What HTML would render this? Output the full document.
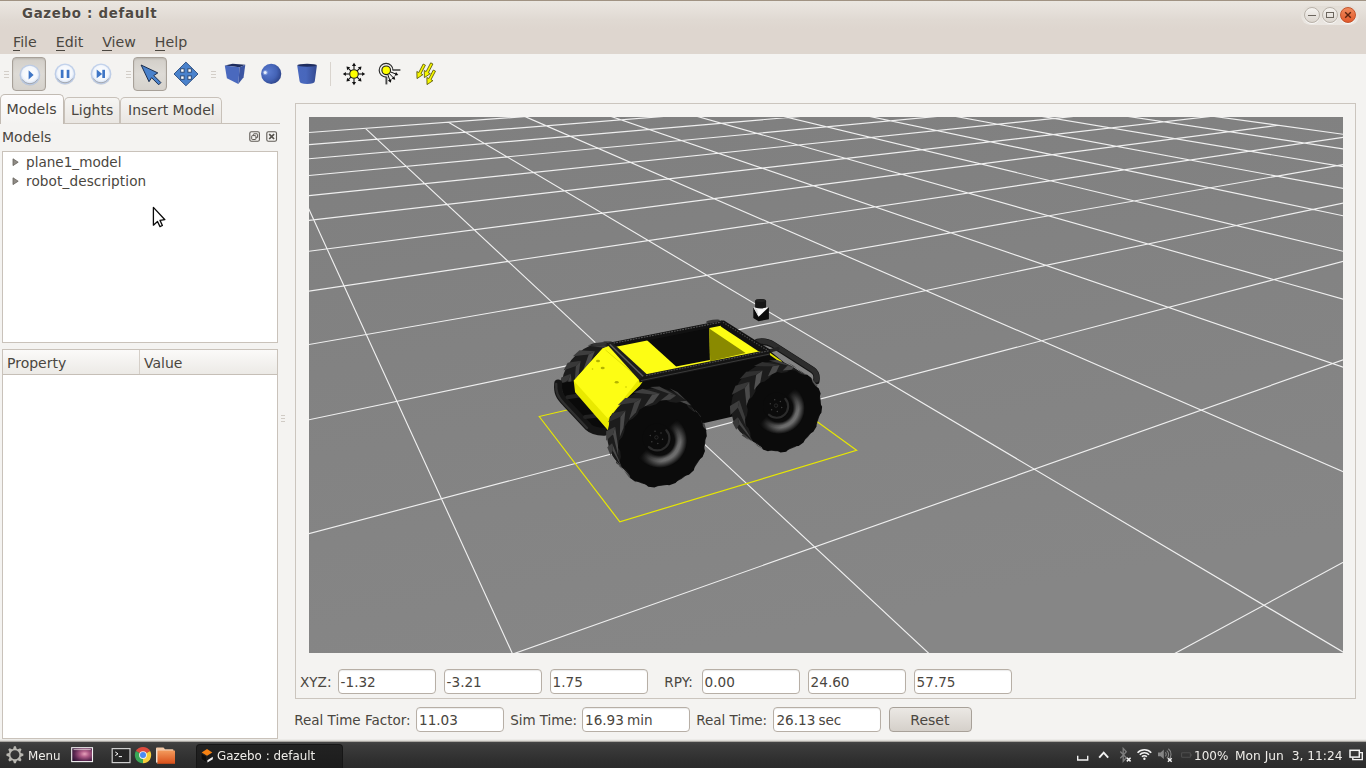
<!DOCTYPE html>
<html><head><meta charset="utf-8"><title>Gazebo : default</title>
<style>

html,body{margin:0;padding:0;}
body{width:1366px;height:768px;overflow:hidden;position:relative;background:#f4f3f1;font-family:"DejaVu Sans","Liberation Sans",sans-serif;font-size:13.33px;color:#4a4640;}
.a{position:absolute;}
.t{position:absolute;white-space:nowrap;line-height:16px;height:16px;}
#tb{left:0;top:0;width:1366px;height:54px;background:linear-gradient(#a09383 0,#a09383 1px,#eae7e1 1px,#e6e1db 9px,#e0d9d2 20px,#ded6cf 29px,#ded6cf 54px);}
#title{font-weight:bold;letter-spacing:0.72px;color:#4f4a44;text-shadow:0 1px 0 rgba(255,255,255,.6);}
.wb{position:absolute;width:16px;height:16px;border-radius:50%;box-sizing:border-box;border:1px solid #b9b2a9;background:linear-gradient(#f6f4f1,#dcd6cf);box-shadow:0 1px 0 rgba(255,255,255,.7);}
.wb.c{border-color:#c4532a;background:linear-gradient(#f08a5d,#e2592b);}
.pressed{position:absolute;box-sizing:border-box;border:1px solid #a8a199;border-radius:4px;background:linear-gradient(#d2cec8,#dedbd6 50%,#d6d2cc);box-shadow:inset 0 1px 2px rgba(0,0,0,.12);}
.grip{position:absolute;width:5px;height:1px;background:#d3cec8;box-shadow:0 3px 0 #d3cec8,0 6px 0 #d3cec8;}
.tab{position:absolute;box-sizing:border-box;border:1px solid #c8c1b9;border-bottom:none;border-radius:5px 5px 0 0;background:linear-gradient(#f6f5f3,#e9e6e2);}
.tab.sel{background:linear-gradient(#fdfcfc,#f8f7f6 60%,#f4f3f1);border-color:#c2bbb3;}
.box{position:absolute;box-sizing:border-box;border:1px solid #c9c2ba;background:#fff;}
.inp{position:absolute;box-sizing:border-box;border:1px solid #b7afa6;border-radius:4px;background:#fff;height:25px;box-shadow:inset 0 1px 1px rgba(0,0,0,.08);}
.btn{position:absolute;box-sizing:border-box;border:1px solid #a8a199;border-radius:4px;background:linear-gradient(#ebe8e4,#d5d0ca);}
#task{left:0;top:742px;width:1366px;height:26px;background:linear-gradient(#454545 0,#3c3c3c 3px,#2f2f2f 70%,#2b2b2b 100%);}
#task .t{color:#ecebe8;}
u{text-decoration:none;border-bottom:1px solid #4a4640;}

</style></head>
<body>
<div class="a" id="tb"></div>
<span class="t" id="title" style="left:22.0px;top:6.2px;">Gazebo : default</span>
<div class="a" style="left:1301px;top:6px;width:58px;height:19px;border-radius:10px;background:linear-gradient(#e2ddd6,#ebe7e2);"></div>
<div class="wb" style="left:1304px;top:7px"></div><div class="a" style="left:1308px;top:15px;width:8px;height:1.4px;background:#6b655d"></div>
<div class="wb" style="left:1321.5px;top:7px"></div><div class="a" style="left:1325.5px;top:11.5px;width:8px;height:6px;box-sizing:border-box;border:1.3px solid #6b655d"></div>
<div class="wb c" style="left:1339.5px;top:7px"></div><svg class="a" style="left:1339.5px;top:7px" width="16" height="16"><path d="M5.2 5.2L10.8 10.8M10.8 5.2L5.2 10.8" stroke="#5a2410" stroke-width="1.4" fill="none"/></svg>
<span class="t" style="left:13px;top:33.9px;font-size:14.2px;"><u>F</u>ile</span>
<span class="t" style="left:55.8px;top:33.9px;font-size:14.2px;"><u>E</u>dit</span>
<span class="t" style="left:102.2px;top:33.9px;font-size:14.2px;"><u>V</u>iew</span>
<span class="t" style="left:154.8px;top:33.9px;font-size:14.2px;"><u>H</u>elp</span>
<div class="grip" style="left:4px;top:71px"></div>
<div class="grip" style="left:126px;top:71px"></div>
<div class="grip" style="left:211px;top:71px"></div>
<div class="pressed" style="left:12px;top:57px;width:34px;height:34px"></div>
<div class="pressed" style="left:133px;top:57px;width:34px;height:34px"></div>
<div class="a" style="left:330px;top:62px;width:1px;height:24px;background:#d9d4ce"></div>
<svg class="a" style="left:0;top:54px" width="460" height="42" viewBox="0 54 460 42">
<defs>
<radialGradient id="pb" cx="0.5" cy="0.45" r="0.55"><stop offset="0" stop-color="#ffffff"/><stop offset="0.72" stop-color="#f4f7fc"/><stop offset="0.86" stop-color="#dfe8f6"/><stop offset="1" stop-color="#b9cdee"/></radialGradient>
<radialGradient id="sph" cx="0.36" cy="0.40" r="0.75"><stop offset="0" stop-color="#5a7bd0"/><stop offset="0.55" stop-color="#4463b6"/><stop offset="0.9" stop-color="#2d4388"/><stop offset="1" stop-color="#1d2c60"/></radialGradient>
<linearGradient id="cyl" x1="0" y1="0" x2="1" y2="0"><stop offset="0" stop-color="#4a68be"/><stop offset="0.45" stop-color="#4867bc"/><stop offset="1" stop-color="#34498f"/></linearGradient>
</defs>
<circle cx="29.9" cy="75.39999999999999" r="10.2" fill="#9a9a9a" opacity="0.35"/><circle cx="29.9" cy="74.8" r="10.4" fill="#b5cbee" opacity="0.75"/><circle cx="29.9" cy="74.8" r="9.1" fill="url(#pb)"/><path d="M22.299999999999997 79.39999999999999A8.9 8.9 0 0 0 37.5 79.39999999999999" stroke="#9c9c9c" stroke-width="1" fill="none" opacity="0.8"/>
<path d="M28.6 70.3L33.6 74.9L28.6 79.5Z" fill="#3f76c6"/>
<circle cx="65" cy="74.5" r="10.2" fill="#9a9a9a" opacity="0.35"/><circle cx="65" cy="73.9" r="10.4" fill="#b5cbee" opacity="0.75"/><circle cx="65" cy="73.9" r="9.1" fill="url(#pb)"/><path d="M57.4 78.5A8.9 8.9 0 0 0 72.6 78.5" stroke="#9c9c9c" stroke-width="1" fill="none" opacity="0.8"/>
<rect x="60.8" y="69.8" width="2.7" height="8.2" fill="#3f76c6"/><rect x="66.7" y="69.8" width="2.7" height="8.2" fill="#3f76c6"/>
<circle cx="101" cy="74.5" r="10.2" fill="#9a9a9a" opacity="0.35"/><circle cx="101" cy="73.9" r="10.4" fill="#b5cbee" opacity="0.75"/><circle cx="101" cy="73.9" r="9.1" fill="url(#pb)"/><path d="M93.4 78.5A8.9 8.9 0 0 0 108.6 78.5" stroke="#9c9c9c" stroke-width="1" fill="none" opacity="0.8"/>
<path d="M96.7 69.6L102.2 73.9L96.7 78.2Z" fill="#3f76c6"/><rect x="102.3" y="69.8" width="2.7" height="8.2" fill="#3f76c6"/>
<path d="M141.1 65L157.8 72.9L153.8 75.5L160.9 82.6L158.7 84.8L151.6 77.7L149 81.7Z" fill="#4a82cc" stroke="#1d2f4f" stroke-width="1" stroke-linejoin="miter"/>
<path d="M174 74L185.9 62.1L198 74L185.9 85.8Z" fill="#4a82cc" stroke="#2b4c7e" stroke-width="0.9" stroke-linejoin="round"/>
<rect x="180.7" y="68.8" width="3.4" height="3.4" fill="#fff" stroke="#24406c" stroke-width="0.9"/>
<rect x="187.9" y="68.8" width="3.4" height="3.4" fill="#fff" stroke="#24406c" stroke-width="0.9"/>
<rect x="180.7" y="75.9" width="3.4" height="3.4" fill="#fff" stroke="#24406c" stroke-width="0.9"/>
<rect x="187.9" y="75.9" width="3.4" height="3.4" fill="#fff" stroke="#24406c" stroke-width="0.9"/>
<path d="M224.8 65.4L232.6 63.8L245.3 64.7L239.6 67.2Z" fill="#1f2d5e"/>
<path d="M224.8 65.4L239.6 67.2L238.3 83.9L226.9 78.2Z" fill="#4a69be"/>
<path d="M239.6 67.2L245.3 64.7L243.6 77.3L238.3 83.9Z" fill="#3c55a2"/>
<circle cx="271.2" cy="73.8" r="10.1" fill="url(#sph)"/><circle cx="265.2" cy="72.6" r="1.5" fill="#fff" opacity="0.95"/><circle cx="265.2" cy="72.6" r="2.6" fill="#cfe0ff" opacity="0.35"/>
<path d="M297.2 65.4L316.9 65.4L314.8 81.2Q314.5 83.9 307.1 83.9Q299.9 83.9 299.6 81.2Z" fill="url(#cyl)"/>
<ellipse cx="307.1" cy="65.3" rx="9.85" ry="1.5" fill="#1f2d5e"/>
<path d="M358.50 74.00L363.20 74.00" stroke="#111" stroke-width="1.1"/>
<path d="M365.20 74.00L362.10 76.10L362.10 71.90Z" fill="#111"/>
<path d="M357.18 77.18L360.08 80.08" stroke="#111" stroke-width="1.1"/>
<path d="M361.50 81.50L357.82 80.79L360.79 77.82Z" fill="#111"/>
<path d="M354.00 78.50L354.00 83.20" stroke="#111" stroke-width="1.1"/>
<path d="M354.00 85.20L351.90 82.10L356.10 82.10Z" fill="#111"/>
<path d="M350.82 77.18L347.92 80.08" stroke="#111" stroke-width="1.1"/>
<path d="M346.50 81.50L347.21 77.82L350.18 80.79Z" fill="#111"/>
<path d="M349.50 74.00L344.80 74.00" stroke="#111" stroke-width="1.1"/>
<path d="M342.80 74.00L345.90 71.90L345.90 76.10Z" fill="#111"/>
<path d="M350.82 70.82L347.92 67.92" stroke="#111" stroke-width="1.1"/>
<path d="M346.50 66.50L350.18 67.21L347.21 70.18Z" fill="#111"/>
<path d="M354.00 69.50L354.00 64.80" stroke="#111" stroke-width="1.1"/>
<path d="M354.00 62.80L356.10 65.90L351.90 65.90Z" fill="#111"/>
<path d="M357.18 70.82L360.08 67.92" stroke="#111" stroke-width="1.1"/>
<path d="M361.50 66.50L360.79 70.18L357.82 67.21Z" fill="#111"/>
<circle cx="354" cy="74" r="4.3" fill="#ffff00" stroke="#1a1a1a" stroke-width="1.1"/>
<path d="M386.2 77.1A6.9 6.9 0 1 1 393 70.2" fill="none" stroke="#2e2e2e" stroke-width="1.2"/>
<path d="M386.4 84.4L386.4 76.6" stroke="#4a4a4a" stroke-width="1.9"/><path d="M392.6 70L400.4 70" stroke="#4a4a4a" stroke-width="1.6"/>
<path d="M389.94 71.72L396.43 74.19" stroke="#111" stroke-width="1"/>
<path d="M398.30 74.90L394.60 75.63L396.02 71.89Z" fill="#111"/>
<path d="M388.97 73.19L393.82 78.26" stroke="#111" stroke-width="1"/>
<path d="M395.20 79.70L391.54 78.77L394.43 76.01Z" fill="#111"/>
<path d="M387.58 74.05L390.11 80.92" stroke="#111" stroke-width="1"/>
<path d="M390.80 82.80L387.82 80.49L391.57 79.11Z" fill="#111"/>
<circle cx="386.2" cy="70.3" r="4.3" fill="#ffff00" stroke="#1a1a1a" stroke-width="1.1"/>
<path d="M423.19 64.02L418.76 72.52L416.85 71.53L417.00 78.60L422.88 74.67L420.97 73.68L425.41 65.18Z" fill="#f6f600" stroke="#4d4d00" stroke-width="0.8" stroke-linejoin="miter"/>
<path d="M430.69 62.82L426.16 71.52L424.25 70.53L424.40 77.60L430.28 73.67L428.37 72.68L432.91 63.98Z" fill="#f6f600" stroke="#4d4d00" stroke-width="0.8" stroke-linejoin="miter"/>
<path d="M433.29 70.02L428.79 78.53L426.89 77.53L427.00 84.60L432.90 80.71L431.00 79.70L435.51 71.18Z" fill="#f6f600" stroke="#4d4d00" stroke-width="0.8" stroke-linejoin="miter"/>
</svg>
<div class="a" style="left:0;top:123px;width:280px;height:1px;background:#c8c1b9"></div>
<div class="tab" style="left:63.5px;top:97px;width:56.5px;height:26px"></div>
<div class="tab" style="left:119.5px;top:97px;width:102px;height:26px"></div>
<div class="tab sel" style="left:0px;top:94px;width:64px;height:30px"></div>
<span class="t" style="left:6.6px;top:100.9px;font-size:14.2px;">Models</span>
<span class="t" style="left:71px;top:101.7px;font-size:14px;">Lights</span>
<span class="t" style="left:128px;top:101.7px;font-size:14px;">Insert Model</span>
<span class="t" style="left:2px;top:128.8px;font-size:14px;">Models</span>
<svg class="a" style="left:248px;top:130px" width="32" height="14" viewBox="248 130 32 14">
<rect x="249.8" y="131.7" width="9.6" height="9.6" rx="1.6" fill="none" stroke="#5f5b55" stroke-width="1.1"/><rect x="253.4" y="133.8" width="4.2" height="3.9" rx="0.6" fill="none" stroke="#5f5b55" stroke-width="1"/><rect x="251.7" y="135.6" width="4.2" height="3.9" rx="0.6" fill="#f4f3f1" stroke="#5f5b55" stroke-width="1"/>
<rect x="266.8" y="131.7" width="9.7" height="9.6" rx="1.6" fill="none" stroke="#5f5b55" stroke-width="1.1"/><path d="M269.2 134.1L274.1 139M274.1 134.1L269.2 139" stroke="#55514b" stroke-width="1.7"/></svg>
<div class="box" style="left:2px;top:151px;width:276px;height:192px"></div>
<svg class="a" style="left:11.5px;top:157.5px" width="8" height="9"><path d="M1 0.8L6.2 4.2L1 7.6Z" fill="#8f8b85" stroke="#66625c" stroke-width="0.8"/></svg>
<svg class="a" style="left:11.5px;top:176.5px" width="8" height="9"><path d="M1 0.8L6.2 4.2L1 7.6Z" fill="#8f8b85" stroke="#66625c" stroke-width="0.8"/></svg>
<span class="t" style="left:26px;top:153.7px;font-size:13.6px;">plane1_model</span>
<span class="t" style="left:26px;top:172.7px;font-size:13.6px;letter-spacing:0.12px;">robot_description</span>
<svg class="a" style="left:152px;top:206px" width="16" height="24" viewBox="0 0 16 24"><path d="M1.4 1.4L1.4 19.2L5.5 15.5L8 20.6L10.4 19.5L8 14.4L12.9 13.7Z" fill="#fff" stroke="#0a0a0a" stroke-width="1.3" stroke-linejoin="round"/></svg>
<div class="box" style="left:2px;top:349px;width:276px;height:390px"></div>
<div class="a" style="left:3px;top:350px;width:274px;height:24px;background:linear-gradient(#fbfaf9,#eceae6);border-bottom:1px solid #c6bfb7"></div>
<div class="a" style="left:139px;top:350px;width:1px;height:24px;background:#d5cfc8"></div>
<span class="t" style="left:7px;top:355.4px;font-size:14px;">Property</span>
<span class="t" style="left:144px;top:355.4px;font-size:14px;">Value</span>
<div class="a" style="left:281px;top:415px;width:4px;height:1px;background:#d0cbc5;box-shadow:0 3px 0 #d0cbc5,0 6px 0 #d0cbc5"></div>
<div class="a" style="left:295px;top:103px;width:1061px;height:596px;box-sizing:border-box;border:1px solid #cbc5be;"></div>
<span class="t" style="left:300px;top:673.9px;font-size:13.6px;">XYZ:</span>
<div class="inp" style="left:338px;top:669px;width:98px"></div>
<span class="t" style="left:340.6px;top:673.9px;font-size:13.6px;">-1.32</span>
<div class="inp" style="left:444px;top:669px;width:98px"></div>
<span class="t" style="left:446.6px;top:673.9px;font-size:13.6px;">-3.21</span>
<div class="inp" style="left:550px;top:669px;width:98px"></div>
<span class="t" style="left:552.6px;top:673.9px;font-size:13.6px;">1.75</span>
<span class="t" style="left:664.3px;top:673.9px;font-size:13.6px;">RPY:</span>
<div class="inp" style="left:702px;top:669px;width:98px"></div>
<span class="t" style="left:704.6px;top:673.9px;font-size:13.6px;">0.00</span>
<div class="inp" style="left:808px;top:669px;width:98px"></div>
<span class="t" style="left:810.6px;top:673.9px;font-size:13.6px;">24.60</span>
<div class="inp" style="left:914px;top:669px;width:98px"></div>
<span class="t" style="left:916.6px;top:673.9px;font-size:13.6px;">57.75</span>
<span class="t" style="left:294.2px;top:712.1px;font-size:13.5px;">Real Time Factor:</span>
<div class="inp" style="left:416px;top:707px;width:88px"></div>
<span class="t" style="left:419px;top:712.1px;font-size:13.6px;">11.03</span>
<span class="t" style="left:510.2px;top:712.1px;font-size:13.5px;letter-spacing:-0.05px;">Sim Time:</span>
<div class="inp" style="left:582px;top:707px;width:108px"></div>
<span class="t" style="left:585px;top:712.1px;font-size:13.6px;word-spacing:-1.2px;">16.93 min</span>
<span class="t" style="left:696.2px;top:712.1px;font-size:13.5px;">Real Time:</span>
<div class="inp" style="left:773px;top:707px;width:108px"></div>
<span class="t" style="left:776.4px;top:712.1px;font-size:13.6px;word-spacing:-1.2px;">26.13 sec</span>
<div class="btn" style="left:889px;top:707px;width:83px;height:25px"></div>
<span class="t" style="left:910.3px;top:712.1px;font-size:14px;">Reset</span>
<svg id="vp" width="1034" height="536" viewBox="309 117 1034 536" style="position:absolute;left:309px;top:117px;display:block">
<defs>
<linearGradient id="gnd" x1="0" y1="0" x2="0.35" y2="1"><stop offset="0" stop-color="#7f7f7f"/><stop offset="1" stop-color="#868686"/></linearGradient>
<radialGradient id="wrg" gradientUnits="userSpaceOnUse" cx="659.6" cy="440.4" r="27.5"><stop offset="0" stop-color="#0b0b0b"/><stop offset="0.54" stop-color="#0d0d0d"/><stop offset="0.60" stop-color="#3a3a3a"/><stop offset="0.68" stop-color="#6a6a6a"/><stop offset="0.76" stop-color="#6e6e6e"/><stop offset="0.88" stop-color="#3c3c3c"/><stop offset="1" stop-color="#0b0b0b"/></radialGradient>
<linearGradient id="wrl" gradientUnits="userSpaceOnUse" x1="640.4" y1="421.1" x2="678.9" y2="459.6"><stop offset="0" stop-color="#000"/><stop offset="0.44" stop-color="#000"/><stop offset="0.62" stop-color="#8a8a8a"/><stop offset="0.8" stop-color="#fff"/><stop offset="1" stop-color="#fff"/></linearGradient>
<mask id="wrm" maskUnits="userSpaceOnUse" x="630.1" y="410.9" width="59.0" height="59.0"><rect x="630.1" y="410.9" width="59.0" height="59.0" fill="url(#wrl)"/></mask>
<radialGradient id="wfg" gradientUnits="userSpaceOnUse" cx="778.8" cy="408.0" r="26"><stop offset="0" stop-color="#0b0b0b"/><stop offset="0.54" stop-color="#0d0d0d"/><stop offset="0.60" stop-color="#3a3a3a"/><stop offset="0.68" stop-color="#6a6a6a"/><stop offset="0.76" stop-color="#6e6e6e"/><stop offset="0.88" stop-color="#3c3c3c"/><stop offset="1" stop-color="#0b0b0b"/></radialGradient>
<linearGradient id="wfl" gradientUnits="userSpaceOnUse" x1="760.6" y1="389.8" x2="797.0" y2="426.2"><stop offset="0" stop-color="#000"/><stop offset="0.44" stop-color="#000"/><stop offset="0.62" stop-color="#8a8a8a"/><stop offset="0.8" stop-color="#fff"/><stop offset="1" stop-color="#fff"/></linearGradient>
<mask id="wfm" maskUnits="userSpaceOnUse" x="750.8" y="380.0" width="56" height="56"><rect x="750.8" y="380.0" width="56" height="56" fill="url(#wfl)"/></mask>
</defs>
<rect x="309" y="117" width="1034" height="536" fill="url(#gnd)"/>
<path d="M1170.1 656.0L1346.0 560.8M513.5 656.0L306.0 202.9M507.2 656.0L1346.0 358.8M931.6 656.0L365.4 128.4M306.0 534.4L1346.0 260.6M1346.0 653.8L448.5 122.2M306.0 420.4L1346.0 202.5M1346.0 472.9L525.2 116.6M306.0 345.0L1346.0 164.1M1346.0 368.2L604.0 114.0M306.0 291.5L1346.0 136.9M1346.0 300.0L688.7 114.0M306.0 251.6L1278.5 125.3M1346.0 252.0L773.4 114.0M306.0 220.7L1212.5 116.2M1346.0 216.4L858.0 114.0M306.0 196.0L1097.1 114.0M1346.0 189.0L942.7 114.0M306.0 175.8L962.9 114.0M1346.0 167.2L1027.4 114.0M306.0 159.0L828.6 114.0M1346.0 149.4L1112.0 114.0M306.0 144.9L694.2 114.0M1346.0 134.7L1196.7 114.0M306.0 132.7L559.9 114.0" stroke="#efefef" stroke-width="1.15" fill="none"/>
<polygon points="539.2,416.5 619.8,521.8 856.6,450.3 744.0,368.7" fill="none" stroke="#e8e800" stroke-width="1.2"/>
<g transform="translate(612.5 394) rotate(-42)">
<ellipse cx="0" cy="-0.0" rx="42" ry="36.5" fill="#1c1c1c"/>
<ellipse cx="0" cy="-2.1" rx="42" ry="36.5" fill="#1c1c1c"/>
<ellipse cx="0" cy="-4.2" rx="42" ry="36.5" fill="#1c1c1c"/>
<ellipse cx="0" cy="-6.4" rx="42" ry="36.5" fill="#1c1c1c"/>
<ellipse cx="0" cy="-8.5" rx="42" ry="36.5" fill="#1c1c1c"/>
<ellipse cx="0" cy="-10.6" rx="42" ry="36.5" fill="#1c1c1c"/>
<ellipse cx="0" cy="-12.8" rx="42" ry="36.5" fill="#1c1c1c"/>
<ellipse cx="0" cy="-14.9" rx="42" ry="36.5" fill="#1c1c1c"/>
<ellipse cx="0" cy="-17.0" rx="42" ry="36.5" fill="#1c1c1c"/>
<polygon points="-37.6,19.0 -41.2,12.0 -43.2,-7.3 -42.4,-1.2" fill="#3c3c3c" />
<polygon points="-42.4,-1.2 -43.2,-7.3 -41.7,-6.2 -38.3,0.9" fill="#303030" />
<polygon points="-43.1,4.9 -43.4,-2.8 -40.4,-21.9 -42.4,-16.0" fill="#424242" />
<polygon points="-42.4,-16.0 -40.4,-21.9 -43.2,-21.0 -43.3,-13.3" fill="#383838" />
<polygon points="-41.7,-10.5 -38.4,-17.7 -30.8,-34.9 -35.3,-30.2" fill="#3c3c3c" />
<polygon points="-35.3,-30.2 -30.8,-34.9 -37.7,-35.8 -41.3,-28.7" fill="#3e3e3e" />
<polygon points="-34.3,-23.2 -28.1,-28.8 -17.4,-42.9 -23.6,-40.0" fill="#424242" />
<polygon points="-23.6,-40.0 -17.4,-42.9 -27.0,-46.6 -33.4,-41.2" fill="#383838" />
<polygon points="-21.9,-32.6 -13.8,-35.8 -1.4,-46.1 -8.4,-45.4" fill="#424242" />
<polygon points="-8.4,-45.4 -1.4,-46.1 -12.4,-53.2 -20.6,-50.3" fill="#383838" />
<polygon points="-5.6,-37.5 3.3,-37.7 15.5,-43.6 8.7,-45.3" fill="#4a4a4a" />
<polygon points="8.7,-45.3 15.5,-43.6 4.7,-54.6 -4.1,-54.6" fill="#3e3e3e" />
<polygon points="12.7,-36.1 20.8,-33.2 30.7,-34.9 25.4,-38.9" fill="#3c3c3c" />
<polygon points="25.4,-38.9 30.7,-34.9 22.1,-49.5 14.0,-52.8" fill="#3e3e3e" />
<polygon points="27.0,-29.6 33.4,-24.2 39.8,-23.3 36.5,-28.7" fill="#424242" />
<polygon points="36.5,-28.7 39.8,-23.3 34.3,-40.2 28.1,-45.8" fill="#3e3e3e" />
<polygon points="36.9,-20.0 40.8,-13.1 43.2,-10.8 42.2,-16.9" fill="#4a4a4a" />
<polygon points="42.2,-16.9 43.2,-10.8 41.3,-28.9 37.6,-35.9" fill="#383838" />
<polygon points="42.9,0.0 42.4,5.4 40.3,8.6 38.4,13.6 38.3,17.5 35.0,22.1 31.0,23.9 26.7,27.5 24.5,30.8 19.1,33.5 14.6,33.6 8.9,35.1 5.2,37.1 -1.0,37.3 -4.9,35.4 -10.8,34.4 -15.3,35.0 -20.9,32.7 -23.2,29.3 -27.9,26.0 -32.1,24.7 -35.9,20.4 -36.6,16.7 -39.0,11.9 -41.9,9.0 -42.9,3.6 -41.3,-0.0 -40.8,-5.2 -42.2,-9.0 -40.3,-14.2 -36.3,-16.5 -33.1,-20.9 -32.2,-24.8 -27.7,-28.6 -23.5,-29.6 -18.4,-32.3 -15.3,-35.1 -9.3,-36.6 -4.9,-35.3 1.0,-35.6 5.2,-37.3 11.4,-36.2 14.5,-33.3 19.9,-31.1 24.4,-30.7 29.2,-27.3 30.8,-23.7 34.4,-19.6 38.0,-17.3 40.5,-12.4 39.7,-8.5 40.7,-3.4" fill="#0b0b0b" />
</g>
<path d="M592 345.3L606 343.6" stroke="#2c2c2c" stroke-width="2.6" stroke-linecap="round"/>
<polygon points="561.0,383.0 574.5,381.0 581.6,399.7 608.0,430.0 604.0,434.0 588.0,428.0 565.0,402.0" fill="#0a0a0a" />
<path d="M558.2 383.5C557.5 392 559 396 566 403L588.5 427C592 430.5 597 431.5 604 431.8" stroke="#151515" stroke-width="8" fill="none" stroke-linecap="round" stroke-linejoin="round"/>
<path d="M556.2 384C555.8 392 557.5 396.5 564 403.5L587 428" stroke="#2f2f2f" stroke-width="2.4" fill="none" stroke-linecap="round"/>
<path d="M567.5 397.3L582.5 395M585 417L600.5 415.3" stroke="#222" stroke-width="4" stroke-linecap="round"/>
<path d="M757.5 342.0C763 341 768.5 342 773 344.8L812.5 370C816 372.4 817.2 375 816.3 381" stroke="#141414" stroke-width="6.6" fill="none" stroke-linecap="round"/>
<path d="M757.5 341.6C763 340.6 768.5 341.6 773 344.4L812.5 369.6C816 372 817.2 374.6 816.5 380" stroke="#2d2d2d" stroke-width="5" fill="none" stroke-linecap="round"/>
<path d="M768.5 351.3L778 348.6" stroke="#242424" stroke-width="3.4" stroke-linecap="round"/>
<polygon points="639.0,379.0 770.0,351.0 786.0,364.0 790.0,400.0 735.0,416.0 700.0,424.0 645.0,445.0 610.0,432.0 625.0,400.0" fill="#0b0b0b" />
<polygon points="769.6,352.6 782.0,361.2 780.6,362.4 769.2,354.6" fill="#e4e400" />
<polygon points="602.5,348.4 612.0,345.0 646.0,377.0 639.6,386.0 623.8,401.2 609.7,417.0 608.6,431.0 575.1,392.3 573.7,380.8" fill="#e9e900" />
<polygon points="602.5,348.4 612.0,345.0 646.0,377.0 639.0,379.0 608.0,418.8 573.7,380.8" fill="#fdfd14" />
<path d="M605.5 350L640 379.2" stroke="#d8d800" stroke-width="0.8"/>
<ellipse cx="598" cy="361" rx="2" ry="1.3" fill="#b4b400"/>
<ellipse cx="602.7" cy="368" rx="2" ry="1.3" fill="#b4b400"/>
<ellipse cx="616.7" cy="382.2" rx="2" ry="1.3" fill="#b4b400"/>
<circle cx="592.5" cy="369" r="0.8" fill="#c8c800"/><circle cx="626" cy="387" r="0.8" fill="#c8c800"/>
<polygon points="612.0,345.2 720.5,324.5 766.0,351.5 645.0,377.0" fill="#fdfd14" />
<polygon points="644.6,338.0 709.3,325.0 709.9,360.0 676.1,366.4" fill="#0b0b0b" />
<polygon points="709.2,326.0 709.2,328.6 745.6,353.0 710.2,361.2" fill="#8a8a00" />
<polygon points="606.5,343.2 721.6,320.6 722.0,325.4 613.5,347.2" fill="#111" />
<path d="M608 344.2L721.6 322" stroke="#555" stroke-width="1.1" stroke-dasharray="1.8 1"/>
<polygon points="721.2,320.4 724.0,320.4 770.5,349.8 768.5,353.4 758.0,351.0 720.8,326.4" fill="#111" />
<path d="M723 322.3L768 350.6" stroke="#4a4a4a" stroke-width="1.2" stroke-dasharray="1.4 1.4"/>
<polygon points="606.3,343.6 612.6,342.8 648.2,375.6 640.2,381.2" fill="#1d1d1d" />
<path d="M609.8 344.2L644.6 377.8" stroke="#5a5a5a" stroke-width="1.5"/>
<polygon points="646.0,374.2 769.6,349.4 769.8,355.2 639.6,382.6 639.0,379.6" fill="#151515" />
<path d="M646 375.6L769 350.8" stroke="#4c4c4c" stroke-width="1.1" stroke-dasharray="1.8 1"/>
<path d="M641 380.6L769 354.2" stroke="#3a3a3a" stroke-width="1"/>
<ellipse cx="599.5" cy="344.2" rx="7" ry="1.6" fill="#353535" transform="rotate(-6 599.5 344.2)"/>
<ellipse cx="713" cy="321.2" rx="7" ry="1.5" fill="#353535" transform="rotate(-8 713 321.2)"/>
<g transform="translate(783.6 411.2) rotate(-57)">
<ellipse cx="0" cy="-0.0" rx="42" ry="35.2" fill="#1c1c1c"/>
<ellipse cx="0" cy="-2.2" rx="42" ry="35.2" fill="#1c1c1c"/>
<ellipse cx="0" cy="-4.5" rx="42" ry="35.2" fill="#1c1c1c"/>
<ellipse cx="0" cy="-6.8" rx="42" ry="35.2" fill="#1c1c1c"/>
<ellipse cx="0" cy="-9.0" rx="42" ry="35.2" fill="#1c1c1c"/>
<ellipse cx="0" cy="-11.2" rx="42" ry="35.2" fill="#1c1c1c"/>
<ellipse cx="0" cy="-13.5" rx="42" ry="35.2" fill="#1c1c1c"/>
<ellipse cx="0" cy="-15.8" rx="42" ry="35.2" fill="#1c1c1c"/>
<ellipse cx="0" cy="-18.0" rx="42" ry="35.2" fill="#1c1c1c"/>
<polygon points="-42.9,5.7 -43.4,-2.5 -40.6,-21.6 -42.6,-15.3" fill="#4a4a4a" />
<polygon points="-42.6,-15.3 -40.6,-21.6 -43.2,-21.7 -43.1,-13.5" fill="#3e3e3e" />
<polygon points="-41.7,-10.4 -37.8,-18.0 -30.1,-35.1 -35.2,-30.1" fill="#424242" />
<polygon points="-35.2,-30.1 -30.1,-35.1 -37.1,-37.0 -41.2,-29.6" fill="#383838" />
<polygon points="-33.2,-23.5 -26.0,-29.2 -15.0,-43.0 -22.1,-40.2" fill="#3c3c3c" />
<polygon points="-22.1,-40.2 -15.0,-43.0 -24.8,-47.9 -32.2,-42.5" fill="#3e3e3e" />
<polygon points="-15.8,-33.9 -6.3,-36.0 6.1,-44.9 -1.8,-45.2" fill="#4a4a4a" />
<polygon points="-1.8,-45.2 6.1,-44.9 -4.9,-54.2 -14.5,-52.4" fill="#383838" />
<polygon points="1.6,-36.4 11.3,-35.2 22.6,-39.9 15.6,-42.8" fill="#525252" />
<polygon points="15.6,-42.8 22.6,-39.9 12.7,-52.8 3.0,-54.3" fill="#303030" />
<polygon points="20.5,-32.1 28.6,-27.4 36.5,-28.5 31.7,-33.7" fill="#4a4a4a" />
<polygon points="31.7,-33.7 36.5,-28.5 29.7,-44.6 21.7,-49.5" fill="#303030" />
<polygon points="33.7,-23.0 39.0,-16.1 42.6,-15.1 40.6,-21.5" fill="#4a4a4a" />
<polygon points="40.6,-21.5 42.6,-15.1 39.6,-33.0 34.6,-40.0" fill="#3e3e3e" />
<polygon points="42.6,-7.4 43.5,0.8 41.2,2.0 42.9,-4.4" fill="#525252" />
<polygon points="42.9,-4.4 41.2,2.0 43.4,-16.0 42.8,-24.2" fill="#383838" />
<polygon points="42.7,6.7 39.8,14.6 33.1,14.3 37.6,8.9" fill="#525252" />
<polygon points="37.6,8.9 33.1,14.3 39.2,-2.3 42.4,-10.1" fill="#3e3e3e" />
<polygon points="43.4,0.0 43.0,5.3 40.3,8.3 38.5,13.1 38.4,16.9 35.1,21.4 30.8,22.9 26.5,26.4 24.7,29.9 19.2,32.6 14.6,32.2 8.9,33.7 5.2,35.9 -1.0,36.1 -5.0,34.2 -10.8,33.2 -15.3,33.7 -20.9,31.5 -23.3,28.3 -28.0,25.2 -32.5,24.2 -36.4,20.0 -36.7,16.1 -39.1,11.5 -42.2,8.7 -43.3,3.5 -41.5,-0.0 -41.0,-5.0 -41.6,-8.6 -39.7,-13.5 -36.4,-16.0 -33.3,-20.2 -32.4,-24.1 -27.9,-27.7 -23.4,-28.4 -18.2,-30.9 -15.4,-34.0 -9.4,-35.5 -4.9,-34.1 1.0,-34.4 5.2,-35.9 11.3,-34.9 14.6,-32.2 20.0,-30.1 24.5,-29.8 29.4,-26.5 30.7,-22.8 34.3,-18.9 38.1,-16.8 40.6,-12.0 40.2,-8.3 41.3,-3.4" fill="#0b0b0b" />
</g>
<circle cx="778.8" cy="408.0" r="26" fill="url(#wfg)" mask="url(#wfm)"/>
<circle cx="776.6" cy="406.2" r="13.6" fill="#0b0b0b"/>
<path d="M769.0 414.7A11.4 11.4 0 0 0 785.3 398.8" stroke="#2b2b2b" stroke-width="2.2" fill="none" stroke-linecap="round"/>
<circle cx="781.7" cy="407.4" r="0.75" fill="#3d3d3d"/>
<circle cx="777.3" cy="411.4" r="0.75" fill="#3d3d3d"/>
<circle cx="771.6" cy="409.7" r="0.75" fill="#3d3d3d"/>
<circle cx="770.3" cy="403.8" r="0.75" fill="#3d3d3d"/>
<circle cx="774.7" cy="399.8" r="0.75" fill="#3d3d3d"/>
<circle cx="780.4" cy="401.5" r="0.75" fill="#3d3d3d"/>
<circle cx="776.0" cy="405.59999999999997" r="1.7" fill="none" stroke="#2e2e2e" stroke-width="0.8"/>
<g transform="translate(662.5 443.8) rotate(-42)">
<ellipse cx="0" cy="-0.0" rx="45.7" ry="39.7" fill="#1c1c1c"/>
<ellipse cx="0" cy="-2.2" rx="45.7" ry="39.7" fill="#1c1c1c"/>
<ellipse cx="0" cy="-4.5" rx="45.7" ry="39.7" fill="#1c1c1c"/>
<ellipse cx="0" cy="-6.8" rx="45.7" ry="39.7" fill="#1c1c1c"/>
<ellipse cx="0" cy="-9.0" rx="45.7" ry="39.7" fill="#1c1c1c"/>
<ellipse cx="0" cy="-11.2" rx="45.7" ry="39.7" fill="#1c1c1c"/>
<ellipse cx="0" cy="-13.5" rx="45.7" ry="39.7" fill="#1c1c1c"/>
<ellipse cx="0" cy="-15.8" rx="45.7" ry="39.7" fill="#1c1c1c"/>
<ellipse cx="0" cy="-18.0" rx="45.7" ry="39.7" fill="#1c1c1c"/>
<polygon points="-45.5,11.1 -47.2,2.4 -45.8,-18.3 -47.0,-11.4" fill="#424242" />
<polygon points="-47.0,-11.4 -45.8,-18.3 -47.3,-16.9 -45.9,-8.2" fill="#303030" />
<polygon points="-46.7,-6.6 -44.0,-15.1 -37.0,-34.2 -41.5,-28.4" fill="#4a4a4a" />
<polygon points="-41.5,-28.4 -37.0,-34.2 -43.4,-34.4 -46.4,-26.0" fill="#3e3e3e" />
<polygon points="-40.7,-21.0 -34.6,-28.0 -23.9,-44.3 -30.4,-40.2" fill="#4a4a4a" />
<polygon points="-30.4,-40.2 -23.9,-44.3 -33.5,-47.0 -39.8,-40.1" fill="#3e3e3e" />
<polygon points="-27.2,-33.6 -18.4,-37.9 -5.2,-49.6 -13.1,-48.3" fill="#4a4a4a" />
<polygon points="-13.1,-48.3 -5.2,-49.6 -16.9,-56.4 -25.9,-52.4" fill="#303030" />
<polygon points="-8.8,-40.4 1.4,-41.1 14.7,-47.8 6.8,-49.5" fill="#424242" />
<polygon points="6.8,-49.5 14.7,-47.8 2.9,-59.0 -7.2,-58.6" fill="#383838" />
<polygon points="11.1,-39.9 20.6,-37.0 31.7,-39.2 25.3,-43.5" fill="#4a4a4a" />
<polygon points="25.3,-43.5 31.7,-39.2 22.0,-54.4 12.6,-57.6" fill="#3e3e3e" />
<polygon points="27.5,-33.5 35.0,-27.6 42.4,-26.7 38.3,-32.7" fill="#424242" />
<polygon points="38.3,-32.7 42.4,-26.7 36.1,-44.6 28.7,-50.6" fill="#3e3e3e" />
<polygon points="41.4,-19.8 45.3,-11.7 47.1,-9.0 46.4,-16.0" fill="#4a4a4a" />
<polygon points="46.4,-16.0 47.1,-9.0 45.8,-28.4 42.2,-36.6" fill="#3e3e3e" />
<polygon points="47.1,-3.8 46.9,5.0 43.2,7.3 45.7,0.7" fill="#4a4a4a" />
<polygon points="45.7,0.7 43.2,7.3 46.7,-11.7 47.2,-20.5" fill="#383838" />
<polygon points="45.4,11.5 41.6,19.6 33.3,19.9 38.5,14.6" fill="#424242" />
<polygon points="38.5,14.6 33.3,19.9 40.8,2.8 45.0,-5.2" fill="#303030" />
<polygon points="46.9,0.0 46.4,5.9 43.6,9.3 41.6,14.7 41.6,19.0 38.0,24.0 33.6,25.9 29.0,29.8 26.8,33.7 20.9,36.7 15.8,36.2 9.6,37.8 5.7,40.6 -1.1,40.8 -5.4,38.5 -11.7,37.4 -16.6,37.9 -22.7,35.4 -25.6,32.2 -30.7,28.6 -35.2,27.1 -39.3,22.4 -39.8,18.2 -42.4,13.0 -45.6,9.8 -46.8,3.9 -44.9,-0.0 -44.4,-5.6 -45.8,-9.8 -43.7,-15.5 -39.7,-18.1 -36.3,-22.9 -35.4,-27.2 -30.5,-31.4 -25.4,-32.0 -19.8,-34.9 -16.6,-38.0 -10.1,-39.7 -5.4,-38.5 1.1,-38.8 5.7,-40.7 12.4,-39.5 15.8,-36.2 21.7,-33.8 26.6,-33.5 31.9,-29.8 33.6,-25.9 37.5,-21.4 41.5,-18.9 44.2,-13.5 43.5,-9.3 44.6,-3.8" fill="#0b0b0b" />
</g>
<circle cx="659.6" cy="440.4" r="27.5" fill="url(#wrg)" mask="url(#wrm)"/>
<circle cx="657" cy="438" r="14.4" fill="#0b0b0b"/>
<path d="M648.9 447.0A12.1 12.1 0 0 0 666.3 430.2" stroke="#2b2b2b" stroke-width="2.2" fill="none" stroke-linecap="round"/>
<circle cx="662.5" cy="439.3" r="0.75" fill="#3d3d3d"/>
<circle cx="657.8" cy="443.6" r="0.75" fill="#3d3d3d"/>
<circle cx="651.8" cy="441.7" r="0.75" fill="#3d3d3d"/>
<circle cx="650.3" cy="435.5" r="0.75" fill="#3d3d3d"/>
<circle cx="655.0" cy="431.2" r="0.75" fill="#3d3d3d"/>
<circle cx="661.0" cy="433.1" r="0.75" fill="#3d3d3d"/>
<circle cx="656.4" cy="437.4" r="1.7" fill="none" stroke="#2e2e2e" stroke-width="0.8"/>
<path d="M753.3 307.2L753.3 318.1L758.5 321.3L768.9 319.2L768.9 307.2Z" fill="#0c0c0c"/>
<path d="M753.4 307.3L768.7 307.3L758.6 316.7Z" fill="#fafafa"/>
<path d="M753.4 307.3L758.6 316.7L757.2 309Z" fill="#dcdcdc"/>
<path d="M755.1 301.3Q755.1 299 760.6 299Q766.1 299 766.1 301.3L766.1 307.6Q760.6 309.4 755.1 307.6Z" fill="#171717"/>
<ellipse cx="760.6" cy="300.6" rx="5.2" ry="1.4" fill="#222"/>
</svg>
<div class="a" style="left:0;top:739px;width:1366px;height:3px;background:linear-gradient(#f4f3f1,#d8d5d0 60%,#8a8782)"></div>
<div class="a" id="task"></div>
<div class="a" style="left:196px;top:744px;width:147px;height:24px;box-sizing:border-box;border:1px solid #161616;border-bottom:none;border-radius:4px 4px 0 0;background:linear-gradient(#222,#1c1c1c)"></div>
<span class="t" style="left:28.2px;top:748.3px;font-size:11.9px;color:#efede9;will-change:transform;">Menu</span>
<span class="t" style="left:217.4px;top:748.3px;font-size:11.9px;color:#efede9;will-change:transform;">Gazebo : default</span>
<span class="t" style="left:1193.7px;top:748.3px;font-size:12.0px;color:#efede9;will-change:transform;">100%</span>
<span class="t" style="left:1234.5px;top:748.3px;font-size:12.25px;color:#efede9;will-change:transform;">Mon Jun&nbsp; 3, 11:24</span>
<svg class="a" style="left:0;top:742px" width="1366" height="26" viewBox="0 742 1366 26">
<defs>
<radialGradient id="dsk" cx="0.62" cy="0.45" r="0.7"><stop offset="0" stop-color="#e7a3bb"/><stop offset="0.3" stop-color="#b05c88"/><stop offset="0.7" stop-color="#5a2650"/><stop offset="1" stop-color="#2e1433"/></radialGradient>
<linearGradient id="fld" x1="0" y1="0" x2="0" y2="1"><stop offset="0" stop-color="#f39a5c"/><stop offset="1" stop-color="#d94f19"/></linearGradient>
</defs>
<path d="M23.35 753.87L23.35 755.73L20.82 756.63L20.38 757.69L21.53 760.11L20.21 761.43L17.79 760.28L16.73 760.72L15.83 763.25L13.97 763.25L13.07 760.72L12.01 760.28L9.59 761.43L8.27 760.11L9.42 757.69L8.98 756.63L6.45 755.73L6.45 753.87L8.98 752.97L9.42 751.91L8.27 749.49L9.59 748.17L12.01 749.32L13.07 748.88L13.97 746.35L15.83 746.35L16.73 748.88L17.79 749.32L20.21 748.17L21.53 749.49L20.38 751.91L20.82 752.97Z M19.4 754.8A4.5 4.5 0 1 0 10.4 754.8A4.5 4.5 0 1 0 19.4 754.8Z" fill="#b9b7b1" fill-rule="evenodd"/>
<rect x="71.7" y="747.7" width="20.8" height="13.9" fill="url(#dsk)" stroke="#f4f4f4" stroke-width="1.1"/><path d="M73.5 749.6L90.8 749.6" stroke="#f0e6ea" stroke-width="0.7"/>
<rect x="112.2" y="748.6" width="17.8" height="14" fill="#262626" stroke="#cfcfcf" stroke-width="1.2"/><path d="M115.3 752L118 753.8L115.3 755.6M118.8 756.6L122 756.6" stroke="#fff" stroke-width="1" fill="none"/>
<path d="M143 755.1L135.90 751.00A8.2 8.2 0 0 1 150.10 751.00Z" fill="#dd4b3e"/>
<path d="M143 755.1L150.10 751.00A8.2 8.2 0 0 1 143.00 763.30Z" fill="#f7cd3b"/>
<path d="M143 755.1L143.00 763.30A8.2 8.2 0 0 1 135.90 751.00Z" fill="#3aa757"/>
<circle cx="143" cy="755.1" r="3.9" fill="#f1f1f1"/><circle cx="143" cy="755.1" r="3.0" fill="#4a8af4"/>
<path d="M156 748.3Q156 747.4 157 747.4L163.5 747.4L165 749.2L172.5 749.2Q173.5 749.2 173.5 750.2L173.5 762L156 762Z" fill="#f3c7a6"/>
<path d="M157.3 750.6L175 750.6L175 763.8L157.3 763.8Z" fill="url(#fld)"/><path d="M156 748.5L157.3 750.6L157.3 763.8L156 762Z" fill="#e9dccf"/>
<path d="M201.7 752.4L207 748.9L212.3 752.4L207 755.8Z" fill="#f58113"/>
<path d="M201.2 753.2L206.8 756.6L206.8 762.6L201.2 759.2Z" fill="#0c0c0c" stroke="#3a3a3a" stroke-width="0.4"/>
<path d="M207.4 756.6L212.8 753.2L212.8 759.2L207.4 762.6Z" fill="#1a1a1a"/>
<path d="M207.4 760.2L212.8 756.8L212.8 759.2L207.4 762.6Z" fill="#f4f4f4"/>
<path d="M1077.7 755.8L1077.7 760L1087.7 760L1087.7 755.8" stroke="#f2f2f2" stroke-width="1.4" fill="none"/>
<path d="M1099.2 757.6L1103.7 752.6L1108.2 757.6" stroke="#f2f2f2" stroke-width="1.9" fill="none"/>
<path d="M1120.3 751.5L1126.3 757.8L1123.2 761.2L1123.2 748.4L1126.3 751.8L1120.3 758.2" stroke="#7e7e7e" stroke-width="1.3" fill="none"/>
<path d="M1126.8 757.8L1130.6 761.4M1130.6 757.8L1126.8 761.4" stroke="#f2f2f2" stroke-width="1.5"/>
<path d="M1137.56 752.84A9.2 9.2 0 0 1 1151.24 752.84" stroke="#f2f2f2" stroke-width="1.5" fill="none"/>
<path d="M1139.79 754.85A6.2 6.2 0 0 1 1149.01 754.85" stroke="#f2f2f2" stroke-width="1.5" fill="none"/>
<path d="M1141.95 756.79A3.3 3.3 0 0 1 1146.85 756.79" stroke="#f2f2f2" stroke-width="1.4" fill="none"/>
<circle cx="1144.4" cy="758.7" r="1.2" fill="#f2f2f2"/>
<path d="M1158 752.6L1160.6 752.6L1163.8 749.6L1163.8 759L1160.6 756.2L1158 756.2Z" fill="#858585"/>
<path d="M1165.27 752.41A2.6 2.6 0 0 1 1165.27 756.39" stroke="#858585" stroke-width="1.1" fill="none"/>
<path d="M1166.81 750.57A5 5 0 0 1 1166.81 758.23" stroke="#858585" stroke-width="1.1" fill="none"/>
<path d="M1168.36 748.73A7.4 7.4 0 0 1 1168.36 760.07" stroke="#858585" stroke-width="1.1" fill="none"/>
<path d="M1167.9 758.2L1171.7 761.8M1171.7 758.2L1167.9 761.8" stroke="#f2f2f2" stroke-width="1.5"/>
<rect x="1181.6" y="752.8" width="8.8" height="4.4" rx="0.8" fill="none" stroke="#4e4e4e" stroke-width="1.1"/><rect x="1190.6" y="754" width="1" height="2" fill="#4e4e4e"/>
<path d="M1352.8 757.4L1352.8 759.6L1362.3 759.6L1362.3 752.6L1359.6 752.6" stroke="#f2f2f2" stroke-width="1.4" fill="none"/><rect x="1350" y="750.3" width="9.3" height="6.8" fill="none" stroke="#f2f2f2" stroke-width="1.5"/>
</svg>
</body></html>
